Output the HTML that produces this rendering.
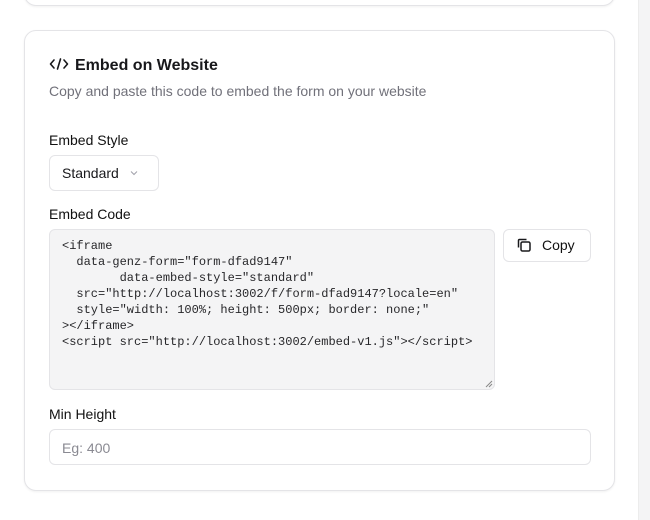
<!DOCTYPE html>
<html><head><meta charset="utf-8"><style>
*{box-sizing:border-box;margin:0;padding:0}
body{width:650px;height:520px;background:#fff;font-family:"Liberation Sans",sans-serif;color:#111;position:relative;overflow:hidden}
.strip{position:absolute;left:638px;top:0;width:12px;height:520px;background:#f4f4f5;border-left:1px solid #ececec}
.card{position:absolute;left:24px;width:591px;border:1px solid #e4e4e7;border-radius:12px;background:#fff;box-shadow:0 1px 2px rgba(0,0,0,.06)}
.abs{position:absolute}
.lbl{font-size:14px;font-weight:400;color:#111}
.code{position:absolute;left:49px;top:229px;width:446px;height:161px;background:#f4f4f5;border:1px solid #e4e4e7;border-radius:6px;font-family:"Liberation Mono",monospace;font-size:12px;line-height:16px;color:#27272a;padding:8px 12px;white-space:pre}
</style></head><body>
<div class="strip"></div>
<div class="card" style="top:-20px;height:26px"></div>
<div class="card" style="top:30px;height:461px"></div>
<div class="abs" style="left:49px;top:56px;font-size:16px;font-weight:600;color:#18181b">
<svg width="20" height="16" viewBox="0 0 20 16" style="vertical-align:-2px;margin-right:6px"><path d="M5 4L1.5 8L5 12M8.5 13L11.5 3M15 4L18.5 8L15 12" fill="none" stroke="#18181b" stroke-width="1.6" stroke-linecap="round" stroke-linejoin="round"/></svg>Embed on Website</div>
<div class="abs" style="left:49px;top:83px;font-size:14px;color:#71717a">Copy and paste this code to embed the form on your website</div>
<div class="abs lbl" style="left:49px;top:132px">Embed Style</div>
<div class="abs" style="left:49px;top:155px;width:110px;height:36px;border:1px solid #e4e4e7;border-radius:6px;font-size:14px;padding:9px 12px;color:#18181b">Standard <svg width="10" height="10" viewBox="0 0 10 10" style="margin-left:6px"><path d="M2 3.5L5 6.5L8 3.5" fill="none" stroke="#a1a1aa" stroke-width="1"/></svg></div>
<div class="abs lbl" style="left:49px;top:206px">Embed Code</div>
<div class="code">&lt;iframe
  data-genz-form="form-dfad9147"
        data-embed-style="standard"
  src="http://localhost:3002/f/form-dfad9147?locale=en"
  style="width: 100%; height: 500px; border: none;"
&gt;&lt;/iframe&gt;
&lt;script src="http://localhost:3002/embed-v1.js"&gt;&lt;/script&gt;</div>
<svg class="abs" style="left:484px;top:379px" width="9" height="9"><path d="M8 2L2 8M8 5L5 8" stroke="#888" stroke-width="1"/></svg>
<div class="abs" style="left:503px;top:229px;width:88px;height:33px;border:1px solid #e4e4e7;border-radius:6px;font-size:14px;padding:7px 0 0 12px;color:#111">
<svg width="16" height="16" viewBox="0 0 16 16" style="vertical-align:-3px;margin-right:10px"><rect x="5" y="5" width="9" height="9" rx="1.5" fill="none" stroke="#18181b" stroke-width="1.5"/><path d="M2.5 10.5V3.5A1 1 0 0 1 3.5 2.5H10.5" fill="none" stroke="#18181b" stroke-width="1.5"/></svg>Copy</div>
<div class="abs lbl" style="left:49px;top:406px">Min Height</div>
<div class="abs" style="left:49px;top:429px;width:542px;height:36px;border:1px solid #e4e4e7;border-radius:6px;font-size:14px;padding:10px 12px;color:#8a8a92">Eg: 400</div>
</body></html>
